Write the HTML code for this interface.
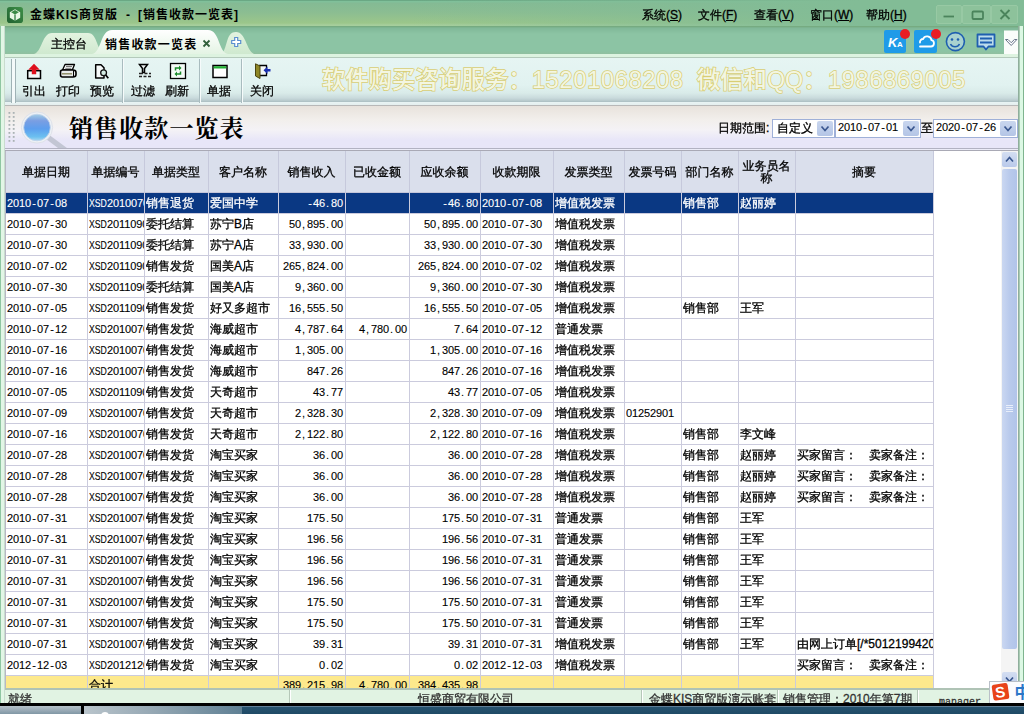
<!DOCTYPE html>
<html lang="zh-CN">
<head>
<meta charset="utf-8">
<title>金蝶KIS商贸版 - [销售收款一览表]</title>
<style>
*{box-sizing:border-box;margin:0;padding:0}
html,body{width:1024px;height:714px;overflow:hidden;background:#fff}
body{position:relative;font-family:"Liberation Sans","WenQuanYi Zen Hei","Noto Sans CJK SC",sans-serif;font-size:12px;color:#000;line-height:14px;-webkit-text-stroke-width:.3px}
.abs{position:absolute}
#title{left:0;top:0;width:1024px;height:26px;background:linear-gradient(90deg,rgba(130,188,150,0) 0,rgba(130,188,150,0) 40%,rgba(130,188,150,1) 84%),linear-gradient(#6aa884 0,#6aa884 1px,#80c09a 1px,#80c09a 2px,#84ba94 3px,#8bbd92 12px,#9bc68a 23px,#a6ce9c 25px)}
#title .cap{-webkit-text-stroke-width:0;left:30px;top:7px;font-family:'Liberation Sans','Noto Sans CJK SC',sans-serif;font-weight:bold;font-size:12px;letter-spacing:1px;white-space:nowrap;line-height:16px}
#menu span{position:absolute;top:7px;white-space:nowrap;line-height:16px}
.wb{top:5px;height:19px;background:#8dc29b;border:1px solid #98c9a4;border-radius:2px}
#tabs{left:0;top:26px;width:1024px;height:29px;background:linear-gradient(#74a87c 0,#78ae86 1px,#80b898 2px,#8cc4a4 8px,#8cc4a4 25px,#90c0a0 27.500px,#ddf3e0 28px)}
#lb{left:0;top:26px;width:5px;height:678px;background:#e2f6e6;border-left:1px solid #8fc6a2;border-right:1px solid #c9dccf}
#rb{left:1018px;top:26px;width:6px;height:677px;background:linear-gradient(90deg,#8fae9c 0,#8fae9c 1px,#a9cbb3 1px,#a9cbb3 2px,#dcf8e4 2px,#dcf8e4 5px,#7eb48e 5px)}
#toolbar{left:5px;top:54px;width:1013px;height:51px;background:linear-gradient(#ddf3e0 0,#ddf3e0 3px,#b4cabb 3px,#b4cabb 4px,#e6f5f3 4px,#e1f2f0 31px,#d9ebe9 39px,#c9dadc 44px,#b6c8cb 47px,#a9bcc0 48px,#e8f3f3 48.500px,#e4eeee 51px)}
.tb{position:absolute;top:85px;width:40px;text-align:center;line-height:13px;font-size:12px;white-space:nowrap}
.sep{position:absolute;top:59px;height:44px;width:2px;border-left:1px solid #a9bcbf;border-right:1px solid #f6fbfb}
#wm span{position:absolute;top:0}
#wm .d{letter-spacing:.85px}
#wm{left:322px;top:64px;width:660px;height:32px;font-size:23.3px;line-height:32px;white-space:nowrap;color:#f3f6e2;-webkit-text-stroke:1.5px #d9ce74;paint-order:stroke fill;font-weight:500;letter-spacing:0;font-family:'Liberation Sans','Noto Sans CJK SC',sans-serif}
#band{left:5px;top:105px;width:1013px;height:46px;background:linear-gradient(#b8b8b8 0,#b8b8b8 1px,#e8e2dc 1px,#f2efec 15px,#f4f2f6 25px,#e8e6f8 35px,#e8e6f8 43px,#b2b2c2 43px,#b2b2c2 44px,#ececf8 44px,#ececf8 45px,#a9a9b5 45px)}
#ttl{-webkit-text-stroke-width:0;left:69px;top:113px;font-family:"Liberation Serif","Noto Serif CJK SC",serif;font-weight:700;font-size:24px;line-height:32px;letter-spacing:1.1px;white-space:nowrap}
.fld{position:absolute;top:119px;height:19px;background:#fff;border:1px solid #9fb0d8;font-size:12px;line-height:14px;padding-left:2px;white-space:nowrap}
.dd{position:absolute;top:1px;right:1px;width:16px;height:15px;background:linear-gradient(#c9d6ee,#b4c5e6);border-radius:2px}
#gridwrap{left:5px;top:151px;width:996px;height:538px;background:#fff;overflow:hidden}
#grid{position:absolute;left:0;top:0;width:929px;height:538px;border-left:1px solid #b8b8c4}
.hrow{position:absolute;left:0;top:0;width:928px;height:42px;background:#dadfec;border-bottom:1px solid #c4c6da}
.hc{position:absolute;top:0;height:41px;border-right:1px solid #c6c9dc;display:flex;align-items:center;justify-content:center;text-align:center;font-size:12px;line-height:12px;letter-spacing:0}
.hc span{position:relative;left:-1px}
.row{position:absolute;left:0;width:928px;height:21px;border-bottom:1px solid #cbcbdd}
.row .c{position:absolute;top:0;height:20px;line-height:21px;border-right:1px solid #cbcbdd;padding-left:0;white-space:nowrap;overflow:hidden;font-size:12px}
.row .c.n{text-align:right;padding-right:2px;word-spacing:0}
.row .c.id{letter-spacing:0}
.m{-webkit-text-stroke-width:.12px;font-family:'Liberation Sans',sans-serif;font-size:11px;letter-spacing:-.117px}
.m i{display:inline-block;width:6px;font-style:normal;letter-spacing:0;text-align:left;padding-left:1px}
.m i.h{text-align:center;padding-left:0}
.xs{display:inline-block;width:18px;transform:scaleX(.79);transform-origin:0 50%;letter-spacing:0;white-space:nowrap}
.row.sel{background:#0a3883;color:#fff}
.row.sel .c{border-right-color:#cbcbdd}
.row.tot{background:#fde98c;height:13px;border-bottom:0;overflow:hidden}
.row.tot .c{height:13px;line-height:19px}
.gap{display:inline-block;width:12px}
#vs{left:1001px;top:151px;width:17px;height:538px;background:#f4f4f4}
#status{left:5px;top:688px;width:1013px;height:16px;background:#e1f3e3;border-top:2px solid #afc3b5;overflow:hidden}
#status span{position:absolute;top:2px;line-height:14px;white-space:nowrap;color:#333}
#status i{position:absolute;top:0;width:2px;height:15px;border-left:1px solid #b5c7b8;border-right:1px solid #fff}
#task{left:0;top:703px;width:1024px;height:11px;background:linear-gradient(#000 0,#000 2.6px,#5f7f98 2.8px,#5f7f98 3.6px,#27536f 4px,#1f4a66 100%)}
</style>
</head>
<body>
<div id="title" class="abs">
  <svg class="abs" style="left:7px;top:7px" width="16" height="16" viewBox="0 0 17 17"><defs><linearGradient id="ai" x1="0" y1="1" x2="1" y2="0"><stop offset="0" stop-color="#1f6030"/><stop offset="1" stop-color="#3f9048"/></linearGradient></defs><rect x="0" y="0" width="17" height="17" rx="3" fill="url(#ai)"/><path d="M8.5 2.5 L14 5.5 L14 11.5 L8.5 14.5 L3 11.5 L3 5.5Z" fill="#e9f7e4"/><path d="M8.5 3.2 L12.6 5.6 L8.5 8 L4.4 5.6Z" fill="#3b8a45"/><path d="M8.5 8V14.5" stroke="#2f7d3f" stroke-width="1.4"/></svg>
  <div class="cap abs">金蝶KIS商贸版<span style="margin:0 7px 0 8px">-</span>[销售收款一览表]</div>
  <div id="menu">
    <span style="left:642px">系统(<u>S</u>)</span>
    <span style="left:698px">文件(<u>F</u>)</span>
    <span style="left:754px">查看(<u>V</u>)</span>
    <span style="left:810px">窗口(<u>W</u>)</span>
    <span style="left:866px">帮助(<u>H</u>)</span>
  </div>
  <div class="wb abs" style="left:936px;width:26px"><svg width="24" height="17"><path d="M6.500 10.500H17" stroke="#4b845c" stroke-width="1.800"/></svg></div>
  <div class="wb abs" style="left:962px;width:29px"><svg width="27" height="17"><rect x="9.500" y="5.500" width="10.500" height="7.500" rx="1" fill="none" stroke="#4b845c" stroke-width="1.800"/></svg></div>
  <div class="wb abs" style="left:991px;width:27px"><svg width="25" height="17"><path d="M8.500 4L17.500 13M17.500 4L8.500 13" stroke="#4b845c" stroke-width="1.900"/></svg></div>
</div>

<div id="tabs" class="abs">
  <svg class="abs" style="left:0;top:0" width="300" height="29" viewBox="0 0 300 29">
    <defs>
      <linearGradient id="g1" x1="0" y1="0" x2="0" y2="1"><stop offset="0" stop-color="#e3f3e0"/><stop offset="1" stop-color="#cfe9cf"/></linearGradient>
      <linearGradient id="g2" x1="0" y1="0" x2="0" y2="1"><stop offset="0" stop-color="#ffffff"/><stop offset="1" stop-color="#e4f4e4"/></linearGradient>
    </defs>
    <path d="M34 28 C42 26 42 7 52 7 L88 7 C98 7 96 26 106 28Z" fill="url(#g1)"/>
    <path d="M222 28 C228 20 226 6 236 6 C246 6 246 24 254 28Z" fill="url(#g1)"/>
    <path d="M92 28 C102 26 100 4 112 4 L208 4 C220 4 218 26 228 28Z" fill="url(#g2)"/>
    <path d="M236 11.5h-2.500v3h-3v3h3v3h3v-3h3v-3h-3v-3z" transform="translate(1.2,0)" fill="#fff" stroke="#5b8fd0" stroke-width="1.2"/>
    <path d="M203.500 14.500l6 6m0-6l-6 6" stroke="#2f5f3a" stroke-width="1.800"/>
  </svg>
  <div class="abs" style="left:51px;top:11px;line-height:14px;white-space:nowrap">主控台</div>
  <div class="abs" style="left:105px;top:12px;line-height:14px;-webkit-text-stroke-width:0;font-family:'Liberation Sans','Noto Sans CJK SC',sans-serif;font-weight:bold;letter-spacing:1.2px;white-space:nowrap">销售收款一览表</div>
  <!-- right icons -->
  <svg class="abs" style="left:880px;top:2px" width="144" height="27" viewBox="0 0 144 27">
    <rect x="4" y="2" width="22" height="23" rx="2" fill="#1f9be8"/>
    <text x="8" y="19" font-family="Liberation Sans,sans-serif" font-weight="bold" font-style="italic" font-size="13" fill="#fff">K</text>
    <text x="17" y="19" font-family="Liberation Sans,sans-serif" font-weight="bold" font-size="8" fill="#fff">A</text>
    <circle cx="25" cy="6" r="5" fill="#e81c24"/>
    <rect x="34" y="2" width="23" height="23" rx="2" fill="#1f9be8"/>
    <path d="M40 18.500h11a3.200 3.200 0 0 0 .5-6.300a4.500 4.500 0 0 0-8.500-1.200a3 3 0 0 0-3 3.500" fill="none" stroke="#fff" stroke-width="1.800" stroke-linecap="round"/>
    <circle cx="56" cy="6" r="5" fill="#e81c24"/>
    <circle cx="75.400" cy="13.600" r="9" fill="#a9d2cf" stroke="#1f5fb0" stroke-width="1.600"/>
    <circle cx="72" cy="11.500" r="1.300" fill="#1f5fb0"/><circle cx="78" cy="11.500" r="1.300" fill="#1f5fb0"/>
    <path d="M70.500 16a5 5 0 0 0 9 0" fill="none" stroke="#1f5fb0" stroke-width="1.600"/>
    <path d="M97.500 6.500h17v12h-6l-2.500 3l-2.500-3h-6z" fill="#bcdcec" stroke="#1f5fb0" stroke-width="1.800" stroke-linejoin="round"/>
    <path d="M100 10.500h12M100 14.500h12" stroke="#1f5fb0" stroke-width="1.800"/>
    <rect x="124" y="2.500" width="14.500" height="25" fill="#fbfdfb"/>
    <path d="M125.500 11.500h2.500l3.200 3.200l3.200-3.200h2.500l-5.700 6z" fill="#fff" stroke="#68748a" stroke-width="1" stroke-linejoin="round"/>
  </svg>
</div>

<div id="lb" class="abs"></div>
<div id="rb" class="abs"></div>

<div id="toolbar" class="abs"></div>
<div class="abs" style="left:11px;top:59px;width:5px;height:44px;border-left:1px solid #9fb2b5;border-right:1px solid #9fb2b5;background:#f4fafa"></div>
<div class="sep" style="left:122px"></div>
<div class="sep" style="left:199px"></div>
<div class="sep" style="left:241px"></div>
<!-- toolbar icons -->
<svg class="abs" style="left:20px;top:60px" width="260" height="24" viewBox="0 0 260 24">
  <!-- export -->
  <rect x="7.700" y="10.700" width="12.800" height="7.800" fill="#f2f8f8" stroke="#000" stroke-width="1.500"/>
  <path d="M14 3.800l5.800 6h-3.600v4.400h-4.400v-4.400h-3.600z" fill="#de0f1c"/>
  <!-- print -->
  <path d="M45 4.500h9.500l-2.200 5.500h-9.800z" fill="#f6f8f8" stroke="#000" stroke-width="1.300" stroke-linejoin="round"/>
  <path d="M46 6.500h6M45.300 8.300h6" stroke="#555" stroke-width=".8"/>
  <path d="M42.500 10h10.500q3 0 3 2.500v2q0 2.500-3 2.500h-10.500q-2 0-2-2v-3q0-2 2-2z" fill="#e9ecec" stroke="#000" stroke-width="1.600"/>
  <path d="M42 13.800h10" stroke="#8a8a60" stroke-width="1.400"/>
  <path d="M53.500 10.500v6.500" stroke="#000" stroke-width="1"/>
  <!-- preview -->
  <path d="M75.700 4.700h5.300l3 3v10.300h-8.300z" fill="#f6f9f9" stroke="#000" stroke-width="1.500" stroke-linejoin="round"/>
  <circle cx="83.600" cy="12.700" r="2.900" fill="#d4ece4" stroke="#111" stroke-width="1.300"/>
  <path d="M85.700 15l2.600 3.200" stroke="#000" stroke-width="1.700"/>
  <!-- filter -->
  <path d="M119.500 4.500h8l-3 4v4h-2v-4z" fill="#e8eeee" stroke="#000" stroke-width="1.500"/>
  <path d="M119 13.500h4m1.500 0h3m1.500 0h2M119 16.500h3m1.500 0h3m1.500 0h3" stroke="#222" stroke-width="1.300"/>
  <!-- refresh -->
  <rect x="150.500" y="3.500" width="15" height="15" fill="#f4fbf6" stroke="#000" stroke-width="1.300"/>
  <path d="M155.500 10.500v-2.500h4.500" fill="none" stroke="#1a8a2a" stroke-width="1.500"/><path d="M159 5.500l2.500 2.500l-2.500 2.500z" fill="#1a8a2a"/><path d="M160.500 11.500v2.500h-4.500" fill="none" stroke="#1a8a2a" stroke-width="1.500"/><path d="M157 11.500l-2.500 2.500l2.500 2.500z" fill="#1a8a2a"/>
  <!-- bill -->
  <rect x="193" y="5.500" width="14" height="12" fill="#fff" stroke="#000" stroke-width="1.500"/>
  <rect x="193.700" y="6.200" width="12.600" height="2.300" fill="#22b034"/>
  <!-- close -->
  <path d="M239 5.500h7.500v10h-7.500" fill="#f4f8f8" stroke="#000" stroke-width="1.300"/>
  <path d="M235.500 3.800l4.500 2.200v12.500l-4.500-2.500z" fill="#8f8726" stroke="#4a4410" stroke-width="1"/>
  <path d="M250.500 9h-3v-2.500l-4 3.800l4 3.800v-2.500h3z" fill="#1a2fb0"/>
</svg>
<div class="tb" style="left:14px">引出</div>
<div class="tb" style="left:48px">打印</div>
<div class="tb" style="left:82px">预览</div>
<div class="tb" style="left:123px">过滤</div>
<div class="tb" style="left:157px">刷新</div>
<div class="tb" style="left:199px">单据</div>
<div class="tb" style="left:242px">关闭</div>
<div id="wm" class="abs"><span style="left:0">软件购买咨询服务：</span><span class="d" style="left:210px">15201068208</span><span style="left:375px">微信和QQ：</span><span class="d" style="left:506px">1986869005</span></div>

<div id="band" class="abs"></div>
<svg class="abs" style="left:5px;top:108px" width="70" height="40" viewBox="0 0 70 40">
  <defs>
    <linearGradient id="lens" x1="0" y1="0" x2="0" y2="1"><stop offset="0" stop-color="#a4cfe6"/><stop offset="0.25" stop-color="#7a9ee2"/><stop offset="0.55" stop-color="#5c9eee"/><stop offset="0.85" stop-color="#6cc0f0"/><stop offset="1" stop-color="#a8d8f0"/></linearGradient>
  </defs>
  <g fill="#aab2b4"><rect x="3.5" y="4" width="1.800" height="1.800"/><rect x="7.8" y="4" width="1.800" height="1.800"/><rect x="3.5" y="8" width="1.800" height="1.800"/><rect x="7.8" y="8" width="1.800" height="1.800"/><rect x="3.5" y="12" width="1.800" height="1.800"/><rect x="7.8" y="12" width="1.800" height="1.800"/><rect x="3.5" y="16" width="1.800" height="1.800"/><rect x="7.8" y="16" width="1.800" height="1.800"/><rect x="3.5" y="20" width="1.800" height="1.800"/><rect x="7.8" y="20" width="1.800" height="1.800"/><rect x="3.5" y="24" width="1.800" height="1.800"/><rect x="7.8" y="24" width="1.800" height="1.800"/><rect x="3.5" y="28" width="1.800" height="1.800"/><rect x="7.8" y="28" width="1.800" height="1.800"/><rect x="3.5" y="32" width="1.800" height="1.800"/><rect x="7.8" y="32" width="1.800" height="1.800"/></g>
  <path d="M41 31l4-3.500l21 15.500h-9z" fill="#bfc2cf" opacity=".9"/>
  <circle cx="32" cy="19.500" r="15.600" fill="#edf1f5" stroke="#dfe2ea" stroke-width="1"/>
  <circle cx="32" cy="19.500" r="13.300" fill="url(#lens)" stroke="#c3d3ea" stroke-width=".8"/>
</svg>
<div id="ttl" class="abs">销售收款一览表</div>
<div class="abs" style="left:718px;top:121px;line-height:15px;white-space:nowrap">日期范围:</div>
<div class="fld" style="left:772px;width:63px;padding-left:4px;padding-top:1px">自定义<div class="dd"><svg width="16" height="15"><path d="M4.500 5.500l3.500 4l3.500-4" fill="none" stroke="#3a5790" stroke-width="1.700"/></svg></div></div>
<div class="fld" style="left:835px;width:86px"><span class="m" style="font-size:11px">2010<i class="h">-</i>07<i class="h">-</i>01</span><div class="dd"><svg width="16" height="15"><path d="M4.500 5.500l3.500 4l3.500-4" fill="none" stroke="#3a5790" stroke-width="1.700"/></svg></div></div>
<div class="abs" style="left:921px;top:121px;line-height:15px">至</div>
<div class="fld" style="left:933px;width:85px"><span class="m" style="font-size:11px">2020<i class="h">-</i>07<i class="h">-</i>26</span><div class="dd"><svg width="16" height="15"><path d="M4.500 5.500l3.500 4l3.500-4" fill="none" stroke="#3a5790" stroke-width="1.700"/></svg></div></div>

<div id="gridwrap" class="abs">
<div id="grid">
<div class="hrow">
<div class="hc" style="left:1px;width:81px"><span>单据日期</span></div>
<div class="hc" style="left:83px;width:56px"><span>单据编号</span></div>
<div class="hc" style="left:140px;width:63px"><span>单据类型</span></div>
<div class="hc" style="left:204px;width:69px"><span>客户名称</span></div>
<div class="hc" style="left:274px;width:66px"><span>销售收入</span></div>
<div class="hc" style="left:341px;width:63px"><span>已收金额</span></div>
<div class="hc" style="left:405px;width:70px"><span>应收余额</span></div>
<div class="hc" style="left:476px;width:72px"><span>收款期限</span></div>
<div class="hc" style="left:549px;width:70px"><span>发票类型</span></div>
<div class="hc" style="left:620px;width:56px"><span>发票号码</span></div>
<div class="hc" style="left:677px;width:56px"><span>部门名称</span></div>
<div class="hc" style="left:734px;width:56px"><span>业务员名<br>称</span></div>
<div class="hc" style="left:791px;width:137px"><span>摘要</span></div>
</div>
<div class="row sel" style="top:42px">
<div class="c" style="left:1px;width:81px"><span class="m">2010<i class="h">-</i>07<i class="h">-</i>08</span></div>
<div class="c id" style="left:83px;width:56px"><span class="m"><span class="xs">XSD</span>2010070</span></div>
<div class="c" style="left:140px;width:63px">销售退货</div>
<div class="c" style="left:204px;width:69px">爱国中学</div>
<div class="c n" style="left:274px;width:66px"><span class="m"><i class="h">-</i>46<i>.</i>80</span></div>
<div class="c n" style="left:341px;width:63px"></div>
<div class="c n" style="left:405px;width:70px"><span class="m"><i class="h">-</i>46<i>.</i>80</span></div>
<div class="c" style="left:476px;width:72px"><span class="m">2010<i class="h">-</i>07<i class="h">-</i>08</span></div>
<div class="c" style="left:549px;width:70px">增值税发票</div>
<div class="c" style="left:620px;width:56px"></div>
<div class="c" style="left:677px;width:56px">销售部</div>
<div class="c" style="left:734px;width:56px">赵丽婷</div>
<div class="c" style="left:791px;width:137px"></div>
</div>
<div class="row" style="top:63px">
<div class="c" style="left:1px;width:81px"><span class="m">2010<i class="h">-</i>07<i class="h">-</i>30</span></div>
<div class="c id" style="left:83px;width:56px"><span class="m"><span class="xs">XSD</span>2011090</span></div>
<div class="c" style="left:140px;width:63px">委托结算</div>
<div class="c" style="left:204px;width:69px">苏宁B店</div>
<div class="c n" style="left:274px;width:66px"><span class="m">50<i>,</i>895<i>.</i>00</span></div>
<div class="c n" style="left:341px;width:63px"></div>
<div class="c n" style="left:405px;width:70px"><span class="m">50<i>,</i>895<i>.</i>00</span></div>
<div class="c" style="left:476px;width:72px"><span class="m">2010<i class="h">-</i>07<i class="h">-</i>30</span></div>
<div class="c" style="left:549px;width:70px">增值税发票</div>
<div class="c" style="left:620px;width:56px"></div>
<div class="c" style="left:677px;width:56px"></div>
<div class="c" style="left:734px;width:56px"></div>
<div class="c" style="left:791px;width:137px"></div>
</div>
<div class="row" style="top:84px">
<div class="c" style="left:1px;width:81px"><span class="m">2010<i class="h">-</i>07<i class="h">-</i>30</span></div>
<div class="c id" style="left:83px;width:56px"><span class="m"><span class="xs">XSD</span>2011090</span></div>
<div class="c" style="left:140px;width:63px">委托结算</div>
<div class="c" style="left:204px;width:69px">苏宁A店</div>
<div class="c n" style="left:274px;width:66px"><span class="m">33<i>,</i>930<i>.</i>00</span></div>
<div class="c n" style="left:341px;width:63px"></div>
<div class="c n" style="left:405px;width:70px"><span class="m">33<i>,</i>930<i>.</i>00</span></div>
<div class="c" style="left:476px;width:72px"><span class="m">2010<i class="h">-</i>07<i class="h">-</i>30</span></div>
<div class="c" style="left:549px;width:70px">增值税发票</div>
<div class="c" style="left:620px;width:56px"></div>
<div class="c" style="left:677px;width:56px"></div>
<div class="c" style="left:734px;width:56px"></div>
<div class="c" style="left:791px;width:137px"></div>
</div>
<div class="row" style="top:105px">
<div class="c" style="left:1px;width:81px"><span class="m">2010<i class="h">-</i>07<i class="h">-</i>02</span></div>
<div class="c id" style="left:83px;width:56px"><span class="m"><span class="xs">XSD</span>2011090</span></div>
<div class="c" style="left:140px;width:63px">销售发货</div>
<div class="c" style="left:204px;width:69px">国美A店</div>
<div class="c n" style="left:274px;width:66px"><span class="m">265<i>,</i>824<i>.</i>00</span></div>
<div class="c n" style="left:341px;width:63px"></div>
<div class="c n" style="left:405px;width:70px"><span class="m">265<i>,</i>824<i>.</i>00</span></div>
<div class="c" style="left:476px;width:72px"><span class="m">2010<i class="h">-</i>07<i class="h">-</i>02</span></div>
<div class="c" style="left:549px;width:70px">增值税发票</div>
<div class="c" style="left:620px;width:56px"></div>
<div class="c" style="left:677px;width:56px"></div>
<div class="c" style="left:734px;width:56px"></div>
<div class="c" style="left:791px;width:137px"></div>
</div>
<div class="row" style="top:126px">
<div class="c" style="left:1px;width:81px"><span class="m">2010<i class="h">-</i>07<i class="h">-</i>30</span></div>
<div class="c id" style="left:83px;width:56px"><span class="m"><span class="xs">XSD</span>2011090</span></div>
<div class="c" style="left:140px;width:63px">委托结算</div>
<div class="c" style="left:204px;width:69px">国美A店</div>
<div class="c n" style="left:274px;width:66px"><span class="m">9<i>,</i>360<i>.</i>00</span></div>
<div class="c n" style="left:341px;width:63px"></div>
<div class="c n" style="left:405px;width:70px"><span class="m">9<i>,</i>360<i>.</i>00</span></div>
<div class="c" style="left:476px;width:72px"><span class="m">2010<i class="h">-</i>07<i class="h">-</i>30</span></div>
<div class="c" style="left:549px;width:70px">增值税发票</div>
<div class="c" style="left:620px;width:56px"></div>
<div class="c" style="left:677px;width:56px"></div>
<div class="c" style="left:734px;width:56px"></div>
<div class="c" style="left:791px;width:137px"></div>
</div>
<div class="row" style="top:147px">
<div class="c" style="left:1px;width:81px"><span class="m">2010<i class="h">-</i>07<i class="h">-</i>05</span></div>
<div class="c id" style="left:83px;width:56px"><span class="m"><span class="xs">XSD</span>2011090</span></div>
<div class="c" style="left:140px;width:63px">销售发货</div>
<div class="c" style="left:204px;width:69px">好又多超市</div>
<div class="c n" style="left:274px;width:66px"><span class="m">16<i>,</i>555<i>.</i>50</span></div>
<div class="c n" style="left:341px;width:63px"></div>
<div class="c n" style="left:405px;width:70px"><span class="m">16<i>,</i>555<i>.</i>50</span></div>
<div class="c" style="left:476px;width:72px"><span class="m">2010<i class="h">-</i>07<i class="h">-</i>05</span></div>
<div class="c" style="left:549px;width:70px">增值税发票</div>
<div class="c" style="left:620px;width:56px"></div>
<div class="c" style="left:677px;width:56px">销售部</div>
<div class="c" style="left:734px;width:56px">王军</div>
<div class="c" style="left:791px;width:137px"></div>
</div>
<div class="row" style="top:168px">
<div class="c" style="left:1px;width:81px"><span class="m">2010<i class="h">-</i>07<i class="h">-</i>12</span></div>
<div class="c id" style="left:83px;width:56px"><span class="m"><span class="xs">XSD</span>2010070</span></div>
<div class="c" style="left:140px;width:63px">销售发货</div>
<div class="c" style="left:204px;width:69px">海威超市</div>
<div class="c n" style="left:274px;width:66px"><span class="m">4<i>,</i>787<i>.</i>64</span></div>
<div class="c n" style="left:341px;width:63px"><span class="m">4<i>,</i>780<i>.</i>00</span></div>
<div class="c n" style="left:405px;width:70px"><span class="m">7<i>.</i>64</span></div>
<div class="c" style="left:476px;width:72px"><span class="m">2010<i class="h">-</i>07<i class="h">-</i>12</span></div>
<div class="c" style="left:549px;width:70px">普通发票</div>
<div class="c" style="left:620px;width:56px"></div>
<div class="c" style="left:677px;width:56px"></div>
<div class="c" style="left:734px;width:56px"></div>
<div class="c" style="left:791px;width:137px"></div>
</div>
<div class="row" style="top:189px">
<div class="c" style="left:1px;width:81px"><span class="m">2010<i class="h">-</i>07<i class="h">-</i>16</span></div>
<div class="c id" style="left:83px;width:56px"><span class="m"><span class="xs">XSD</span>2010070</span></div>
<div class="c" style="left:140px;width:63px">销售发货</div>
<div class="c" style="left:204px;width:69px">海威超市</div>
<div class="c n" style="left:274px;width:66px"><span class="m">1<i>,</i>305<i>.</i>00</span></div>
<div class="c n" style="left:341px;width:63px"></div>
<div class="c n" style="left:405px;width:70px"><span class="m">1<i>,</i>305<i>.</i>00</span></div>
<div class="c" style="left:476px;width:72px"><span class="m">2010<i class="h">-</i>07<i class="h">-</i>16</span></div>
<div class="c" style="left:549px;width:70px">增值税发票</div>
<div class="c" style="left:620px;width:56px"></div>
<div class="c" style="left:677px;width:56px"></div>
<div class="c" style="left:734px;width:56px"></div>
<div class="c" style="left:791px;width:137px"></div>
</div>
<div class="row" style="top:210px">
<div class="c" style="left:1px;width:81px"><span class="m">2010<i class="h">-</i>07<i class="h">-</i>16</span></div>
<div class="c id" style="left:83px;width:56px"><span class="m"><span class="xs">XSD</span>2010070</span></div>
<div class="c" style="left:140px;width:63px">销售发货</div>
<div class="c" style="left:204px;width:69px">海威超市</div>
<div class="c n" style="left:274px;width:66px"><span class="m">847<i>.</i>26</span></div>
<div class="c n" style="left:341px;width:63px"></div>
<div class="c n" style="left:405px;width:70px"><span class="m">847<i>.</i>26</span></div>
<div class="c" style="left:476px;width:72px"><span class="m">2010<i class="h">-</i>07<i class="h">-</i>16</span></div>
<div class="c" style="left:549px;width:70px">增值税发票</div>
<div class="c" style="left:620px;width:56px"></div>
<div class="c" style="left:677px;width:56px"></div>
<div class="c" style="left:734px;width:56px"></div>
<div class="c" style="left:791px;width:137px"></div>
</div>
<div class="row" style="top:231px">
<div class="c" style="left:1px;width:81px"><span class="m">2010<i class="h">-</i>07<i class="h">-</i>05</span></div>
<div class="c id" style="left:83px;width:56px"><span class="m"><span class="xs">XSD</span>2011090</span></div>
<div class="c" style="left:140px;width:63px">销售发货</div>
<div class="c" style="left:204px;width:69px">天奇超市</div>
<div class="c n" style="left:274px;width:66px"><span class="m">43<i>.</i>77</span></div>
<div class="c n" style="left:341px;width:63px"></div>
<div class="c n" style="left:405px;width:70px"><span class="m">43<i>.</i>77</span></div>
<div class="c" style="left:476px;width:72px"><span class="m">2010<i class="h">-</i>07<i class="h">-</i>05</span></div>
<div class="c" style="left:549px;width:70px">增值税发票</div>
<div class="c" style="left:620px;width:56px"></div>
<div class="c" style="left:677px;width:56px"></div>
<div class="c" style="left:734px;width:56px"></div>
<div class="c" style="left:791px;width:137px"></div>
</div>
<div class="row" style="top:252px">
<div class="c" style="left:1px;width:81px"><span class="m">2010<i class="h">-</i>07<i class="h">-</i>09</span></div>
<div class="c id" style="left:83px;width:56px"><span class="m"><span class="xs">XSD</span>2010070</span></div>
<div class="c" style="left:140px;width:63px">销售发货</div>
<div class="c" style="left:204px;width:69px">天奇超市</div>
<div class="c n" style="left:274px;width:66px"><span class="m">2<i>,</i>328<i>.</i>30</span></div>
<div class="c n" style="left:341px;width:63px"></div>
<div class="c n" style="left:405px;width:70px"><span class="m">2<i>,</i>328<i>.</i>30</span></div>
<div class="c" style="left:476px;width:72px"><span class="m">2010<i class="h">-</i>07<i class="h">-</i>09</span></div>
<div class="c" style="left:549px;width:70px">增值税发票</div>
<div class="c" style="left:620px;width:56px"><span class="m">01252901</span></div>
<div class="c" style="left:677px;width:56px"></div>
<div class="c" style="left:734px;width:56px"></div>
<div class="c" style="left:791px;width:137px"></div>
</div>
<div class="row" style="top:273px">
<div class="c" style="left:1px;width:81px"><span class="m">2010<i class="h">-</i>07<i class="h">-</i>16</span></div>
<div class="c id" style="left:83px;width:56px"><span class="m"><span class="xs">XSD</span>2010070</span></div>
<div class="c" style="left:140px;width:63px">销售发货</div>
<div class="c" style="left:204px;width:69px">天奇超市</div>
<div class="c n" style="left:274px;width:66px"><span class="m">2<i>,</i>122<i>.</i>80</span></div>
<div class="c n" style="left:341px;width:63px"></div>
<div class="c n" style="left:405px;width:70px"><span class="m">2<i>,</i>122<i>.</i>80</span></div>
<div class="c" style="left:476px;width:72px"><span class="m">2010<i class="h">-</i>07<i class="h">-</i>16</span></div>
<div class="c" style="left:549px;width:70px">增值税发票</div>
<div class="c" style="left:620px;width:56px"></div>
<div class="c" style="left:677px;width:56px">销售部</div>
<div class="c" style="left:734px;width:56px">李文峰</div>
<div class="c" style="left:791px;width:137px"></div>
</div>
<div class="row" style="top:294px">
<div class="c" style="left:1px;width:81px"><span class="m">2010<i class="h">-</i>07<i class="h">-</i>28</span></div>
<div class="c id" style="left:83px;width:56px"><span class="m"><span class="xs">XSD</span>2010070</span></div>
<div class="c" style="left:140px;width:63px">销售发货</div>
<div class="c" style="left:204px;width:69px">淘宝买家</div>
<div class="c n" style="left:274px;width:66px"><span class="m">36<i>.</i>00</span></div>
<div class="c n" style="left:341px;width:63px"></div>
<div class="c n" style="left:405px;width:70px"><span class="m">36<i>.</i>00</span></div>
<div class="c" style="left:476px;width:72px"><span class="m">2010<i class="h">-</i>07<i class="h">-</i>28</span></div>
<div class="c" style="left:549px;width:70px">增值税发票</div>
<div class="c" style="left:620px;width:56px"></div>
<div class="c" style="left:677px;width:56px">销售部</div>
<div class="c" style="left:734px;width:56px">赵丽婷</div>
<div class="c" style="left:791px;width:137px">买家留言：<span class="gap"></span>卖家备注：</div>
</div>
<div class="row" style="top:315px">
<div class="c" style="left:1px;width:81px"><span class="m">2010<i class="h">-</i>07<i class="h">-</i>28</span></div>
<div class="c id" style="left:83px;width:56px"><span class="m"><span class="xs">XSD</span>2010070</span></div>
<div class="c" style="left:140px;width:63px">销售发货</div>
<div class="c" style="left:204px;width:69px">淘宝买家</div>
<div class="c n" style="left:274px;width:66px"><span class="m">36<i>.</i>00</span></div>
<div class="c n" style="left:341px;width:63px"></div>
<div class="c n" style="left:405px;width:70px"><span class="m">36<i>.</i>00</span></div>
<div class="c" style="left:476px;width:72px"><span class="m">2010<i class="h">-</i>07<i class="h">-</i>28</span></div>
<div class="c" style="left:549px;width:70px">增值税发票</div>
<div class="c" style="left:620px;width:56px"></div>
<div class="c" style="left:677px;width:56px">销售部</div>
<div class="c" style="left:734px;width:56px">赵丽婷</div>
<div class="c" style="left:791px;width:137px">买家留言：<span class="gap"></span>卖家备注：</div>
</div>
<div class="row" style="top:336px">
<div class="c" style="left:1px;width:81px"><span class="m">2010<i class="h">-</i>07<i class="h">-</i>28</span></div>
<div class="c id" style="left:83px;width:56px"><span class="m"><span class="xs">XSD</span>2010070</span></div>
<div class="c" style="left:140px;width:63px">销售发货</div>
<div class="c" style="left:204px;width:69px">淘宝买家</div>
<div class="c n" style="left:274px;width:66px"><span class="m">36<i>.</i>00</span></div>
<div class="c n" style="left:341px;width:63px"></div>
<div class="c n" style="left:405px;width:70px"><span class="m">36<i>.</i>00</span></div>
<div class="c" style="left:476px;width:72px"><span class="m">2010<i class="h">-</i>07<i class="h">-</i>28</span></div>
<div class="c" style="left:549px;width:70px">增值税发票</div>
<div class="c" style="left:620px;width:56px"></div>
<div class="c" style="left:677px;width:56px">销售部</div>
<div class="c" style="left:734px;width:56px">赵丽婷</div>
<div class="c" style="left:791px;width:137px">买家留言：<span class="gap"></span>卖家备注：</div>
</div>
<div class="row" style="top:357px">
<div class="c" style="left:1px;width:81px"><span class="m">2010<i class="h">-</i>07<i class="h">-</i>31</span></div>
<div class="c id" style="left:83px;width:56px"><span class="m"><span class="xs">XSD</span>2010070</span></div>
<div class="c" style="left:140px;width:63px">销售发货</div>
<div class="c" style="left:204px;width:69px">淘宝买家</div>
<div class="c n" style="left:274px;width:66px"><span class="m">175<i>.</i>50</span></div>
<div class="c n" style="left:341px;width:63px"></div>
<div class="c n" style="left:405px;width:70px"><span class="m">175<i>.</i>50</span></div>
<div class="c" style="left:476px;width:72px"><span class="m">2010<i class="h">-</i>07<i class="h">-</i>31</span></div>
<div class="c" style="left:549px;width:70px">普通发票</div>
<div class="c" style="left:620px;width:56px"></div>
<div class="c" style="left:677px;width:56px">销售部</div>
<div class="c" style="left:734px;width:56px">王军</div>
<div class="c" style="left:791px;width:137px"></div>
</div>
<div class="row" style="top:378px">
<div class="c" style="left:1px;width:81px"><span class="m">2010<i class="h">-</i>07<i class="h">-</i>31</span></div>
<div class="c id" style="left:83px;width:56px"><span class="m"><span class="xs">XSD</span>2010070</span></div>
<div class="c" style="left:140px;width:63px">销售发货</div>
<div class="c" style="left:204px;width:69px">淘宝买家</div>
<div class="c n" style="left:274px;width:66px"><span class="m">196<i>.</i>56</span></div>
<div class="c n" style="left:341px;width:63px"></div>
<div class="c n" style="left:405px;width:70px"><span class="m">196<i>.</i>56</span></div>
<div class="c" style="left:476px;width:72px"><span class="m">2010<i class="h">-</i>07<i class="h">-</i>31</span></div>
<div class="c" style="left:549px;width:70px">普通发票</div>
<div class="c" style="left:620px;width:56px"></div>
<div class="c" style="left:677px;width:56px">销售部</div>
<div class="c" style="left:734px;width:56px">王军</div>
<div class="c" style="left:791px;width:137px"></div>
</div>
<div class="row" style="top:399px">
<div class="c" style="left:1px;width:81px"><span class="m">2010<i class="h">-</i>07<i class="h">-</i>31</span></div>
<div class="c id" style="left:83px;width:56px"><span class="m"><span class="xs">XSD</span>2010070</span></div>
<div class="c" style="left:140px;width:63px">销售发货</div>
<div class="c" style="left:204px;width:69px">淘宝买家</div>
<div class="c n" style="left:274px;width:66px"><span class="m">196<i>.</i>56</span></div>
<div class="c n" style="left:341px;width:63px"></div>
<div class="c n" style="left:405px;width:70px"><span class="m">196<i>.</i>56</span></div>
<div class="c" style="left:476px;width:72px"><span class="m">2010<i class="h">-</i>07<i class="h">-</i>31</span></div>
<div class="c" style="left:549px;width:70px">普通发票</div>
<div class="c" style="left:620px;width:56px"></div>
<div class="c" style="left:677px;width:56px">销售部</div>
<div class="c" style="left:734px;width:56px">王军</div>
<div class="c" style="left:791px;width:137px"></div>
</div>
<div class="row" style="top:420px">
<div class="c" style="left:1px;width:81px"><span class="m">2010<i class="h">-</i>07<i class="h">-</i>31</span></div>
<div class="c id" style="left:83px;width:56px"><span class="m"><span class="xs">XSD</span>2010070</span></div>
<div class="c" style="left:140px;width:63px">销售发货</div>
<div class="c" style="left:204px;width:69px">淘宝买家</div>
<div class="c n" style="left:274px;width:66px"><span class="m">196<i>.</i>56</span></div>
<div class="c n" style="left:341px;width:63px"></div>
<div class="c n" style="left:405px;width:70px"><span class="m">196<i>.</i>56</span></div>
<div class="c" style="left:476px;width:72px"><span class="m">2010<i class="h">-</i>07<i class="h">-</i>31</span></div>
<div class="c" style="left:549px;width:70px">普通发票</div>
<div class="c" style="left:620px;width:56px"></div>
<div class="c" style="left:677px;width:56px">销售部</div>
<div class="c" style="left:734px;width:56px">王军</div>
<div class="c" style="left:791px;width:137px"></div>
</div>
<div class="row" style="top:441px">
<div class="c" style="left:1px;width:81px"><span class="m">2010<i class="h">-</i>07<i class="h">-</i>31</span></div>
<div class="c id" style="left:83px;width:56px"><span class="m"><span class="xs">XSD</span>2010070</span></div>
<div class="c" style="left:140px;width:63px">销售发货</div>
<div class="c" style="left:204px;width:69px">淘宝买家</div>
<div class="c n" style="left:274px;width:66px"><span class="m">175<i>.</i>50</span></div>
<div class="c n" style="left:341px;width:63px"></div>
<div class="c n" style="left:405px;width:70px"><span class="m">175<i>.</i>50</span></div>
<div class="c" style="left:476px;width:72px"><span class="m">2010<i class="h">-</i>07<i class="h">-</i>31</span></div>
<div class="c" style="left:549px;width:70px">普通发票</div>
<div class="c" style="left:620px;width:56px"></div>
<div class="c" style="left:677px;width:56px">销售部</div>
<div class="c" style="left:734px;width:56px">王军</div>
<div class="c" style="left:791px;width:137px"></div>
</div>
<div class="row" style="top:462px">
<div class="c" style="left:1px;width:81px"><span class="m">2010<i class="h">-</i>07<i class="h">-</i>31</span></div>
<div class="c id" style="left:83px;width:56px"><span class="m"><span class="xs">XSD</span>2010070</span></div>
<div class="c" style="left:140px;width:63px">销售发货</div>
<div class="c" style="left:204px;width:69px">淘宝买家</div>
<div class="c n" style="left:274px;width:66px"><span class="m">175<i>.</i>50</span></div>
<div class="c n" style="left:341px;width:63px"></div>
<div class="c n" style="left:405px;width:70px"><span class="m">175<i>.</i>50</span></div>
<div class="c" style="left:476px;width:72px"><span class="m">2010<i class="h">-</i>07<i class="h">-</i>31</span></div>
<div class="c" style="left:549px;width:70px">普通发票</div>
<div class="c" style="left:620px;width:56px"></div>
<div class="c" style="left:677px;width:56px">销售部</div>
<div class="c" style="left:734px;width:56px">王军</div>
<div class="c" style="left:791px;width:137px"></div>
</div>
<div class="row" style="top:483px">
<div class="c" style="left:1px;width:81px"><span class="m">2010<i class="h">-</i>07<i class="h">-</i>31</span></div>
<div class="c id" style="left:83px;width:56px"><span class="m"><span class="xs">XSD</span>2010070</span></div>
<div class="c" style="left:140px;width:63px">销售发货</div>
<div class="c" style="left:204px;width:69px">淘宝买家</div>
<div class="c n" style="left:274px;width:66px"><span class="m">39<i>.</i>31</span></div>
<div class="c n" style="left:341px;width:63px"></div>
<div class="c n" style="left:405px;width:70px"><span class="m">39<i>.</i>31</span></div>
<div class="c" style="left:476px;width:72px"><span class="m">2010<i class="h">-</i>07<i class="h">-</i>31</span></div>
<div class="c" style="left:549px;width:70px">增值税发票</div>
<div class="c" style="left:620px;width:56px"></div>
<div class="c" style="left:677px;width:56px">销售部</div>
<div class="c" style="left:734px;width:56px">王军</div>
<div class="c" style="left:791px;width:137px">由网上订单[/*5012199420</div>
</div>
<div class="row" style="top:504px">
<div class="c" style="left:1px;width:81px"><span class="m">2012<i class="h">-</i>12<i class="h">-</i>03</span></div>
<div class="c id" style="left:83px;width:56px"><span class="m"><span class="xs">XSD</span>2012120</span></div>
<div class="c" style="left:140px;width:63px">销售发货</div>
<div class="c" style="left:204px;width:69px">淘宝买家</div>
<div class="c n" style="left:274px;width:66px"><span class="m">0<i>.</i>02</span></div>
<div class="c n" style="left:341px;width:63px"></div>
<div class="c n" style="left:405px;width:70px"><span class="m">0<i>.</i>02</span></div>
<div class="c" style="left:476px;width:72px"><span class="m">2012<i class="h">-</i>12<i class="h">-</i>03</span></div>
<div class="c" style="left:549px;width:70px">增值税发票</div>
<div class="c" style="left:620px;width:56px"></div>
<div class="c" style="left:677px;width:56px"></div>
<div class="c" style="left:734px;width:56px"></div>
<div class="c" style="left:791px;width:137px">买家留言：<span class="gap"></span>卖家备注：</div>
</div>
<div class="row tot" style="top:525px">
<div class="c" style="left:1px;width:81px"></div>
<div class="c" style="left:83px;width:56px">合计</div>
<div class="c" style="left:140px;width:63px"></div>
<div class="c" style="left:204px;width:69px"></div>
<div class="c n" style="left:274px;width:66px"><span class="m">389<i>,</i>215<i>.</i>98</span></div>
<div class="c n" style="left:341px;width:63px"><span class="m">4<i>,</i>780<i>.</i>00</span></div>
<div class="c n" style="left:405px;width:70px"><span class="m">384<i>,</i>435<i>.</i>98</span></div>
<div class="c" style="left:476px;width:72px"></div>
<div class="c" style="left:549px;width:70px"></div>
<div class="c" style="left:620px;width:56px"></div>
<div class="c" style="left:677px;width:56px"></div>
<div class="c" style="left:734px;width:56px"></div>
<div class="c" style="left:791px;width:137px"></div>
</div>
</div>
</div>

<div id="vs" class="abs">
  <div class="abs" style="left:1px;top:1px;width:15px;height:15px;background:linear-gradient(#d4def2,#b9c9ea);border-radius:2px"><svg width="15" height="15"><path d="M4 9.500l3.500-4l3.500 4" fill="none" stroke="#3a5790" stroke-width="1.700"/></svg></div>
  <div class="abs" style="left:1px;top:18px;width:15px;height:480px;background:linear-gradient(90deg,#cad7f1,#b9caec 50%,#b1c4ea);border-radius:2px"></div>
  <div class="abs" style="left:5px;top:254px;width:7px;height:7px;background:repeating-linear-gradient(#e8eefa 0,#e8eefa 1px,transparent 1px,transparent 2px)"></div>
  <div class="abs" style="left:1px;top:521px;width:15px;height:16px;background:linear-gradient(#d4def2,#b9c9ea);border-radius:2px"><svg width="15" height="15"><path d="M4 5.500l3.500 4l3.500-4" fill="none" stroke="#3a5790" stroke-width="1.700"/></svg></div>
</div>

<div id="status" class="abs">
  <span style="left:3px">就绪</span>
  <i style="left:284px"></i>
  <span style="left:413px">恒盛商贸有限公司</span>
  <i style="left:636px"></i>
  <span style="left:644px">金蝶KIS商贸版演示账套</span>
  <i style="left:772px"></i>
  <span style="left:778px">销售管理：2010年第7期</span>
  <i style="left:912px"></i>
  <span style="left:934px;top:6px;font-family:'Liberation Mono',monospace;font-size:10px">manager</span>
</div>
<!-- IME -->
<div class="abs" style="left:989px;top:681px;width:36px;height:22px;background:#fbfcfe;border:1px solid #b9c0c8;border-right:0;border-bottom:0"></div>
<svg class="abs" style="left:990px;top:682px" width="34" height="21" viewBox="0 0 34 21">
  <rect x="2.500" y="1.800" width="16" height="16" rx="2.500" fill="#e8431a" transform="rotate(-8 10.500 9.800)"/>
  <text x="5.300" y="15.300" font-family="Liberation Sans,sans-serif" font-weight="bold" font-size="15" fill="#fff" transform="rotate(-8 10.500 9.800)">S</text>
  <text x="24.500" y="16" font-family="Noto Sans CJK SC,sans-serif" font-weight="bold" font-size="16" fill="#2a76c8">中</text>
</svg>
<div id="task" class="abs">
  <div class="abs" style="left:0;top:3px;width:81px;height:8px;background:linear-gradient(#b6c2ca,#8197a5)"></div>
  <div class="abs" style="left:81px;top:0;width:3px;height:11px;background:#000"></div>
  <div class="abs" style="left:84px;top:3px;width:158px;height:8px;background:linear-gradient(90deg,#b9c4cb,#94a7b3 45%,#5f8094)"></div>
  <div class="abs" style="left:101px;top:9px;width:8px;height:8px;border-radius:50%;background:#fff"></div>
</div>
</body>
</html>
